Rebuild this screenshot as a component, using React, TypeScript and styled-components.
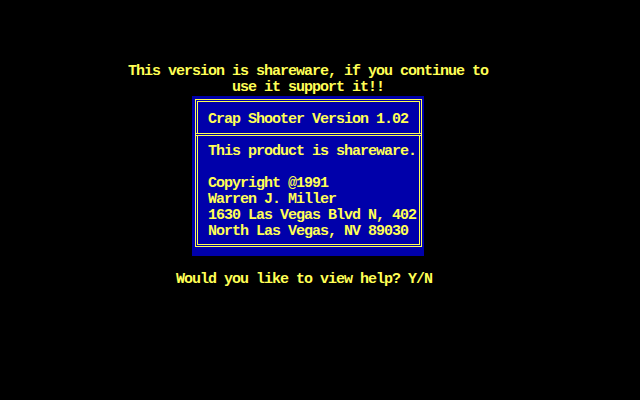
import React from "react";
import styled, { createGlobalStyle } from "styled-components";

const Global = createGlobalStyle`
  html, body { margin: 0; padding: 0; background: #000; }
  body { width: 640px; height: 400px; overflow: hidden; }
`;

const YELLOW = "#ffff55";
const BLUE = "#0000aa";

const Screen = styled.div`
  width: 640px;
  height: 400px;
  box-sizing: border-box;
  padding-top: 64px;
  background: #000;
  display: flex;
  flex-direction: column;
  font-family: "Liberation Mono", "DejaVu Sans Mono", monospace;
  font-weight: bold;
  font-size: 15px;
  letter-spacing: -1px;
  line-height: 16px;
  color: ${YELLOW};
`;

const Line = styled.div<{ $col: number; $gap?: number }>`
  height: 16px;
  white-space: pre;
  padding-left: ${(p) => p.$col * 8}px;
  margin-top: ${(p) => (p.$gap ?? 0) * 16}px;
`;

const Box = styled.div`
  margin-left: 192px;
  width: 232px;
  height: 160px;
  box-sizing: border-box;
  background: ${BLUE};
  padding: 3px 2px 9px 3px;
  display: flex;
`;

const Frame = styled.div`
  flex: 1;
  border: 3px double ${YELLOW};
  padding: 10px 0 4px 0;
  display: flex;
  flex-direction: column;
`;

const BoxLine = styled.div`
  height: 16px;
  white-space: pre;
  padding-left: 10px;
`;

const Divider = styled.div`
  height: 1px;
  margin: 5px -2px 8px -2px;
  background: ${BLUE};
  border-top: 1px solid ${YELLOW};
  border-bottom: 1px solid ${YELLOW};
`;

export default function App() {
  return (
    <>
      <Global />
      <Screen>
        <Line $col={16}>This version is shareware, if you continue to</Line>
        <Line $col={29}>use it support it!!</Line>
        <Box>
          <Frame>
            <BoxLine>Crap Shooter Version 1.02</BoxLine>
            <Divider />
            <BoxLine>This product is shareware.</BoxLine>
            <BoxLine> </BoxLine>
            <BoxLine>Copyright @1991</BoxLine>
            <BoxLine>Warren J. Miller</BoxLine>
            <BoxLine>1630 Las Vegas Blvd N, 402</BoxLine>
            <BoxLine>North Las Vegas, NV 89030</BoxLine>
          </Frame>
        </Box>
        <Line $col={22} $gap={1}>Would you like to view help? Y/N</Line>
      </Screen>
    </>
  );
}
